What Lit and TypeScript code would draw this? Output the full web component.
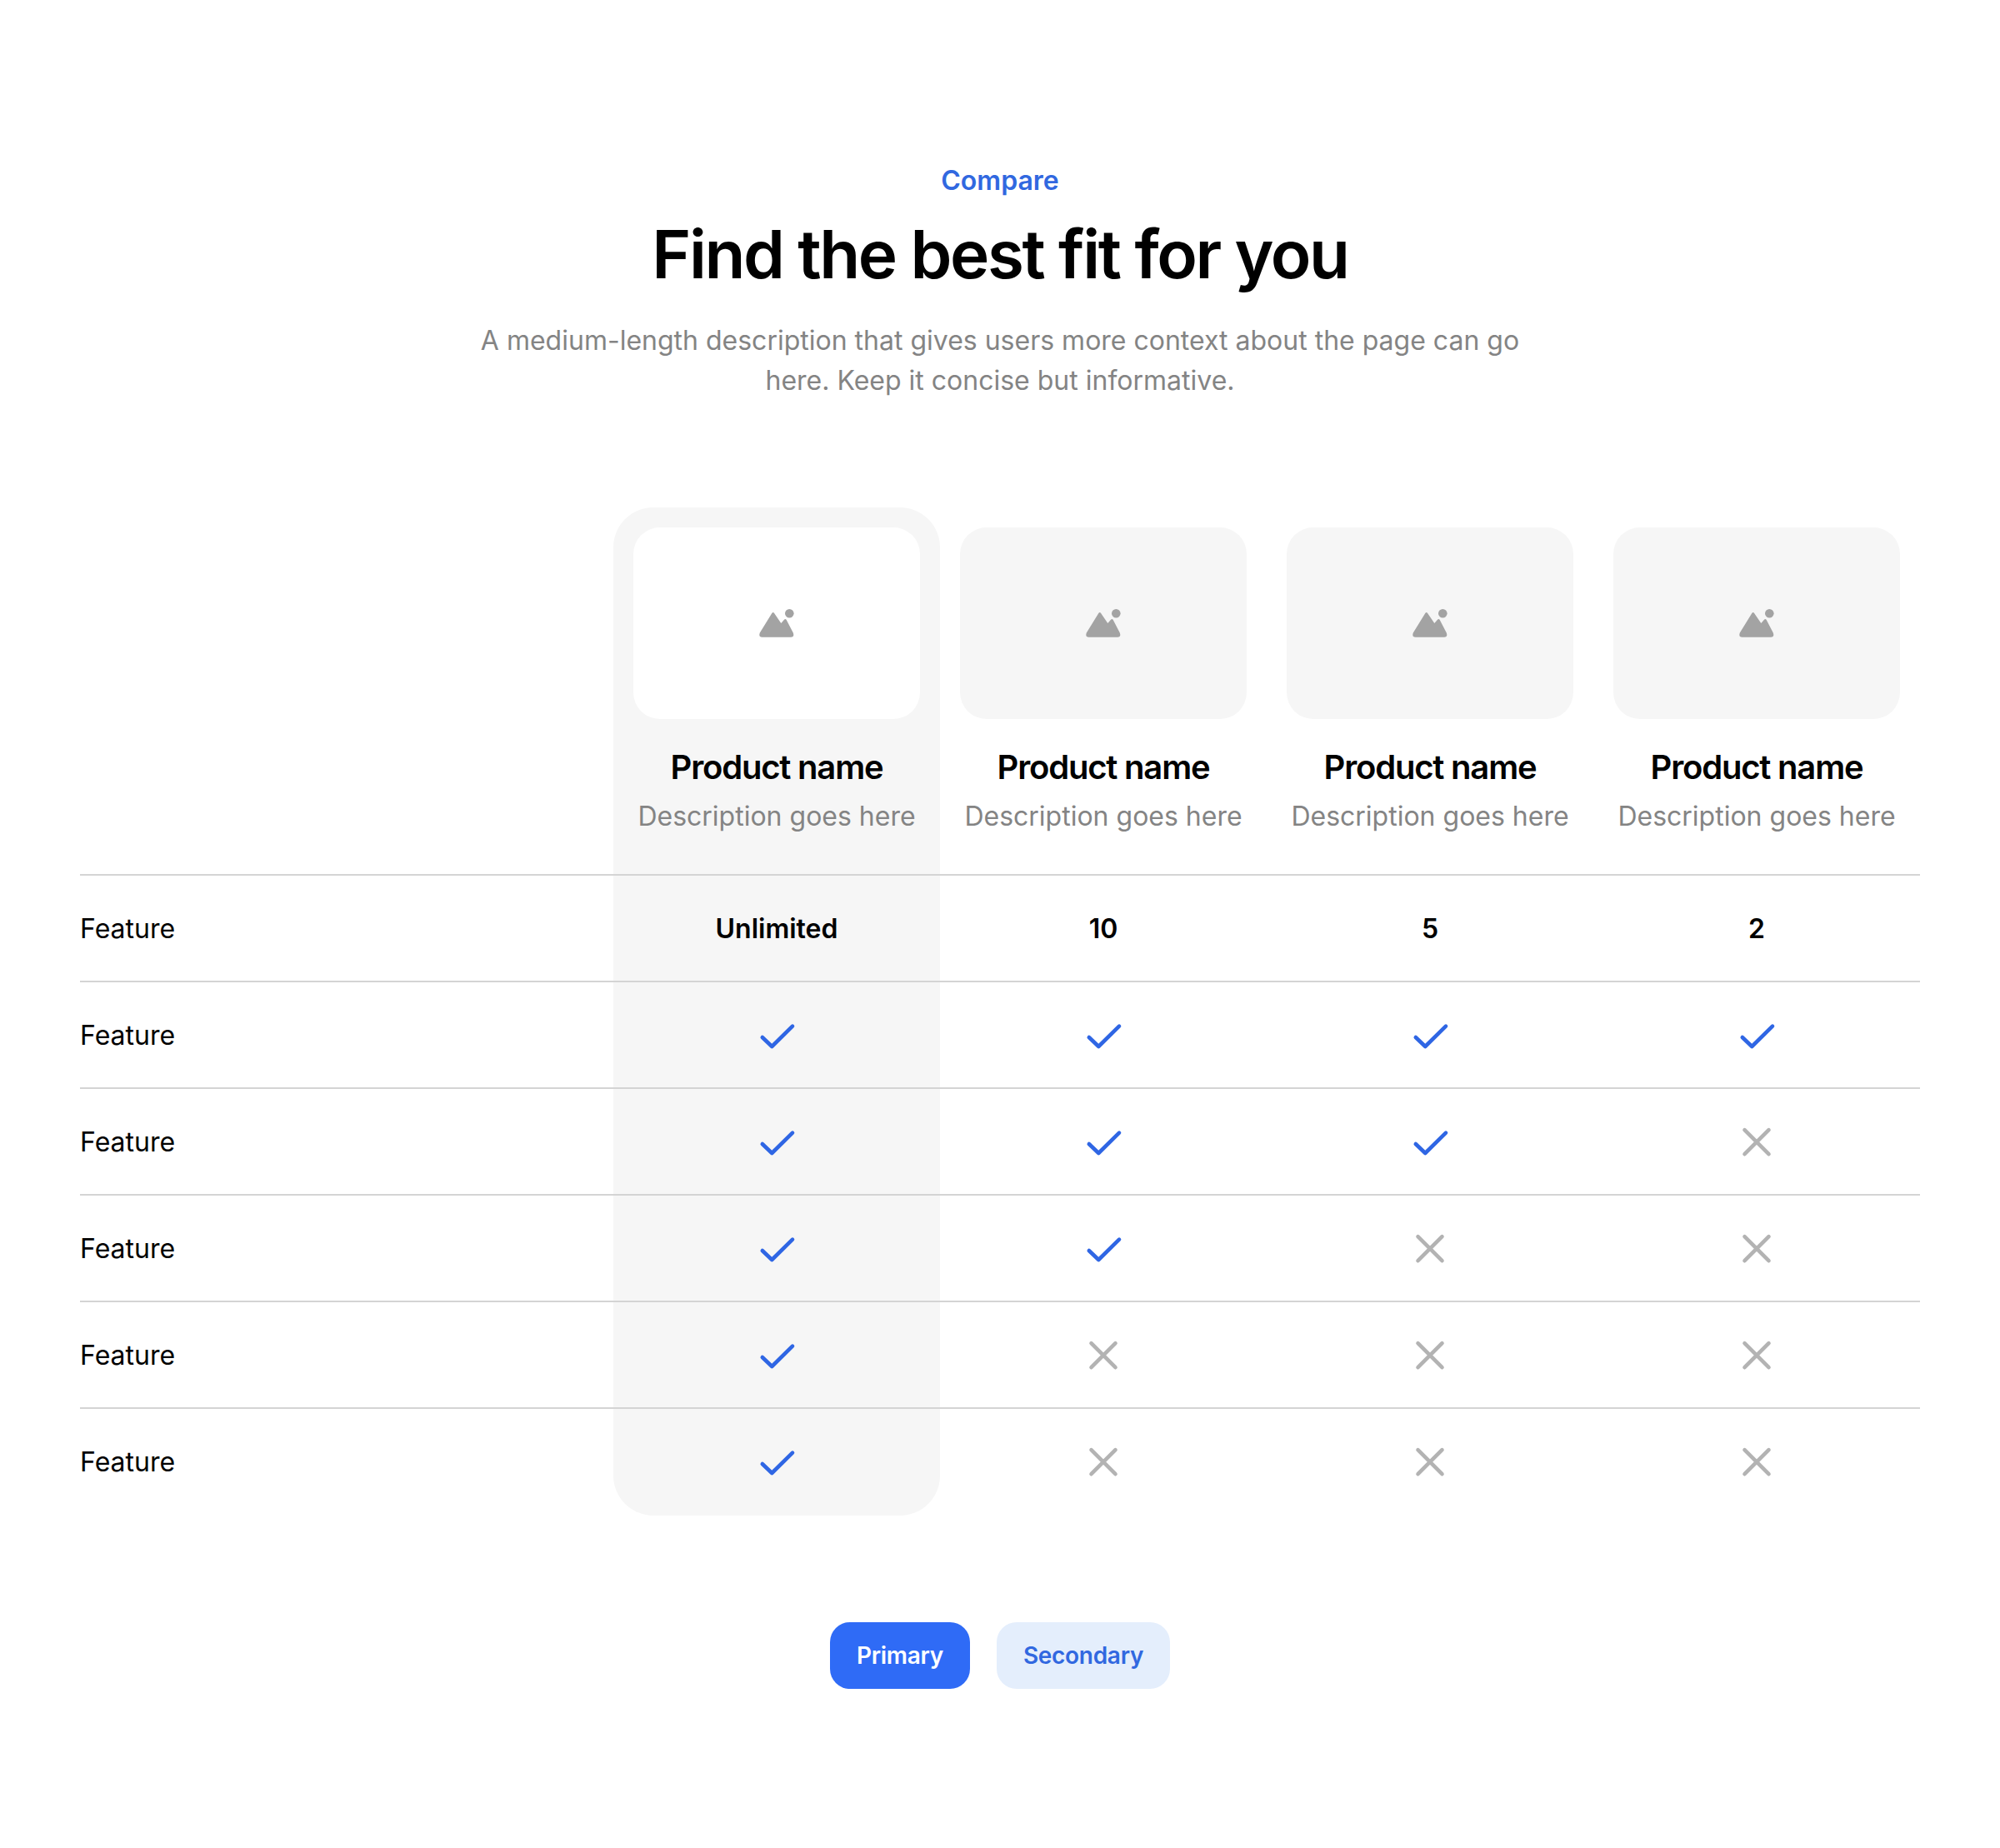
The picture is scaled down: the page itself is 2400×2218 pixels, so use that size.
import { LitElement, html, css } from "lit";
import { customElement } from "lit/decorators.js";

const imageIcon = html`<svg class="mark" viewBox="0 0 48 48" fill="none" aria-hidden="true">
  <circle cx="39.3" cy="12.3" r="5.3" fill="#a3a3a3"/>
  <path d="M18.3 12 Q19.7 10.2 21.1 12 L29.3 24 L33 19.8 Q34.3 18.4 35.6 19.8 L43.8 35.4 Q45.6 40.7 41 40.7 L6.5 40.7 Q2 40.7 3.8 35.4 Z" fill="#a3a3a3"/>
</svg>`;

const check = html`<svg class="mark" viewBox="0 0 48 48" fill="none" aria-hidden="true">
  <path d="M6.8 27 L18.3 38 L43 13.7" stroke="#2f66e4" stroke-width="4.6" stroke-linecap="round" stroke-linejoin="round"/>
</svg>`;

const cross = html`<svg class="mark" viewBox="0 0 48 48" fill="none" aria-hidden="true">
  <path d="M9.5 10.2 L38.5 39.2 M38.5 10.2 L9.5 39.2" stroke="#b3b3b3" stroke-width="4.6" stroke-linecap="round"/>
</svg>`;

type Cell = string | boolean;
const rows: Cell[][] = [
  ["Unlimited", "10", "5", "2"],
  [true, true, true, true],
  [true, true, true, false],
  [true, true, false, false],
  [true, false, false, false],
  [true, false, false, false],
];

@customElement("app-root")
export class AppRoot extends LitElement {
  static styles = css`
    :host {
      display: block;
      background: #fff;
      font-family: Inter, "Noto Sans", sans-serif;
      color: #000;
    }
    .page {
      padding: 193px 96px 191px;
      display: flex;
      flex-direction: column;
      align-items: center;
    }
    .head {
      display: flex;
      flex-direction: column;
      align-items: center;
      text-align: center;
      width: 1280px;
    }
    .eyebrow {
      font-size: 32px;
      line-height: 48px;
      font-weight: 600;
      color: #3168e0;
    }
    h1 {
      margin: 16px 0 0;
      font-size: 80px;
      line-height: 96px;
      font-weight: 600;
      letter-spacing: -2.4px;
    }
    .lede {
      margin: 32px 0 0;
      font-size: 32px;
      line-height: 48px;
      color: #848484;
    }
    .table {
      width: 100%;
      margin-top: 128px;
      display: flex;
      flex-direction: column;
    }
    .row {
      display: grid;
      grid-template-columns: 640px repeat(4, 392px);
    }
    .row.body {
      border-top: 2px solid #d4d4d4;
      height: 128px;
      box-sizing: border-box;
    }
    .row.body.end {
      height: 130px;
    }
    .hl {
      background: #f6f6f6;
    }
    .prod {
      padding: 24px 24px 45px;
      display: flex;
      flex-direction: column;
      align-items: center;
      text-align: center;
    }
    .prod.hl {
      border-radius: 48px 48px 0 0;
    }
    .thumb {
      width: 100%;
      height: 230px;
      border-radius: 32px;
      background: #f6f6f6;
      display: flex;
      align-items: center;
      justify-content: center;
    }
    .hl .thumb {
      background: #fff;
    }
    .name {
      margin-top: 33px;
      font-size: 40px;
      line-height: 50px;
      font-weight: 600;
      letter-spacing: -1.2px;
    }
    .desc {
      margin-top: 10px;
      font-size: 32px;
      line-height: 48px;
      color: #848484;
      white-space: nowrap;
    }
    .label {
      display: flex;
      align-items: center;
      font-size: 32px;
    }
    .cell {
      display: flex;
      align-items: center;
      justify-content: center;
      font-size: 32px;
      font-weight: 600;
    }
    .cell.last {
      border-radius: 0 0 48px 48px;
    }
    .end .label,
    .end .cell {
      padding-bottom: 2px;
    }
    .mark {
      width: 48px;
      height: 48px;
      display: block;
    }
    .actions {
      margin-top: 128px;
      display: flex;
      gap: 32px;
    }
    .btn {
      height: 80px;
      padding: 0 32px;
      border: 0;
      border-radius: 24px;
      font: 600 28px/40px Inter, sans-serif;
      letter-spacing: -0.3px;
      display: flex;
      align-items: center;
    }
    .primary {
      background: #2f6bf6;
      color: #fff;
    }
    .secondary {
      background: #e4eefc;
      color: #3168e0;
    }
  `;

  render() {
    return html`<div class="page">
      <div class="head">
        <div class="eyebrow">Compare</div>
        <h1>Find the best fit for you</h1>
        <p class="lede">A medium-length description that gives users more context about the page can go<br />here. Keep it concise but informative.</p>
      </div>
      <div class="table">
        <div class="row">
          <div></div>
          ${[0, 1, 2, 3].map(
            (i) => html`<div class="prod ${i === 0 ? "hl" : ""}">
              <div class="thumb">${imageIcon}</div>
              <div class="name">Product name</div>
              <div class="desc">Description goes here</div>
            </div>`
          )}
        </div>
        ${rows.map(
          (r, ri) => html`<div class="row body ${ri === rows.length - 1 ? "end" : ""}">
            <div class="label">Feature</div>
            ${r.map(
              (c, i) => html`<div class="cell ${i === 0 ? "hl" : ""} ${i === 0 && ri === rows.length - 1 ? "last" : ""}">
                ${typeof c === "string" ? c : c ? check : cross}
              </div>`
            )}
          </div>`
        )}
      </div>
      <div class="actions">
        <button class="btn primary">Primary</button>
        <button class="btn secondary">Secondary</button>
      </div>
    </div>`;
  }
}
